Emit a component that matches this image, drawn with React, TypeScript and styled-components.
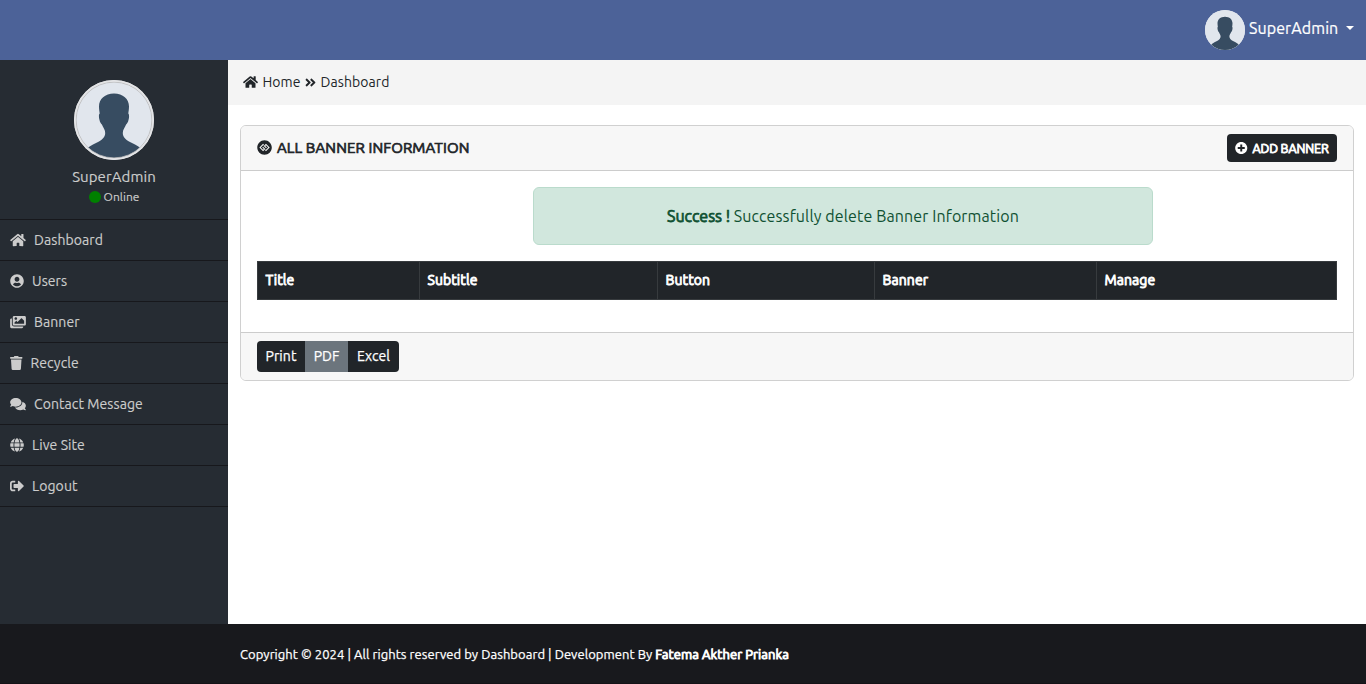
import React from "react";
import styled, { createGlobalStyle } from "styled-components";
import {
  FaHome,
  FaUserCircle,
  FaImages,
  FaTrash,
  FaComments,
  FaGlobe,
  FaSignOutAlt,
  FaAngleDoubleRight,
  FaGgCircle,
  FaPlusCircle,
} from "react-icons/fa";

const Global = createGlobalStyle`
  *, *::before, *::after { box-sizing: border-box; }
  body {
    margin: 0;
    background: #fff;
    color: #212529;
    font-family: Ubuntu, "Noto Sans", sans-serif;
    overflow: hidden;
  }
  svg { display: block; flex: none; }
`;

const Label = styled.span<{ $size: number; $track?: number; $stroke?: number }>`
  font-size: ${(p) => p.$size}px;
  letter-spacing: ${(p) => p.$track ?? 0}px;
  font-weight: 400;
  -webkit-text-stroke: ${(p) => p.$stroke ?? 0}px currentColor;
  line-height: 20px;
  white-space: pre;
`;

const Icon = styled.span<{ $width: number; $height?: number }>`
  display: flex;
  flex: none;
  svg {
    width: ${(p) => p.$width}px;
    height: ${(p) => p.$height ?? 14}px;
  }
`;

const Page = styled.div`
  height: 684px;
  display: flex;
  flex-direction: column;
`;

const TopBar = styled.header`
  height: 60px;
  flex: none;
  background: #4c6298;
  color: #fff;
  display: flex;
  justify-content: flex-end;
  padding: 10px 12px 0 0;
`;

const UserMenu = styled.div`
  display: flex;
  height: 40px;
  gap: 4px;
`;

const UserName = styled.div`
  display: flex;
  width: 105px;
  height: 36px;
  align-items: center;
  justify-content: space-between;
`;

const Caret = styled.i`
  border-top: 4px solid #fff;
  border-left: 4px solid transparent;
  border-right: 4px solid transparent;
`;

const Middle = styled.div`
  flex: 1;
  display: flex;
`;

const Sidebar = styled.aside`
  width: 228px;
  flex: none;
  background: #262c33;
  color: #ccc;
`;

const Profile = styled.div`
  height: 160px;
  border-bottom: 1px solid #17181c;
  padding-top: 20px;
  display: flex;
  flex-direction: column;
  align-items: center;
`;

const ProfileName = styled.div`
  height: 20px;
  margin-top: 7px;
  display: flex;
`;

const Status = styled.div`
  display: flex;
  align-items: center;
  gap: 3px;
  height: 20px;
`;

const Dot = styled.i`
  width: 12px;
  height: 12px;
  border-radius: 50%;
  background: #008000;
`;

const MenuItem = styled.a`
  height: 41px;
  border-bottom: 1px solid #17181c;
  padding-left: 10px;
  display: flex;
  align-items: center;
  gap: 8px;
`;

const Main = styled.main`
  flex: 1;
  min-width: 0;
`;

const Breadcrumb = styled.nav`
  height: 45px;
  background: #f4f4f4;
  padding: 0 0 1px 15px;
  display: flex;
  align-items: center;
  gap: 4.5px;
`;

const Card = styled.section`
  margin: 20px 12px 0;
  height: 256px;
  border: 1px solid #d0d0d0;
  border-radius: 6px;
  overflow: hidden;
  display: flex;
  flex-direction: column;
`;

const CardHeader = styled.div`
  height: 45px;
  flex: none;
  background: #f7f7f7;
  border-bottom: 1px solid #ccc;
  padding: 0 16px;
  display: flex;
  align-items: center;
  justify-content: space-between;
`;

const CardTitle = styled.div`
  display: flex;
  align-items: center;
  gap: 5px;
  padding-bottom: 1px;
`;

const AddButton = styled.button`
  width: 110px;
  height: 28px;
  border: 0;
  border-radius: 4px;
  background: #212529;
  color: #fff;
  font-family: inherit;
  padding: 0 8px 1px;
  display: flex;
  align-items: center;
  gap: 5px;
`;

const CardBody = styled.div`
  flex: 1;
  padding: 16px 16px 0;
`;

const Alert = styled.div`
  width: 620px;
  height: 58px;
  margin-left: 276px;
  border: 1px solid #badbcc;
  border-radius: 6px;
  background: #d1e7dd;
  color: #0f5132;
  display: flex;
  align-items: center;
  justify-content: center;
`;

const Table = styled.div`
  margin-top: 16px;
  height: 39px;
  display: grid;
  grid-template-columns: 161px 238px 217px 222px 240px;
  background: #212529;
  border: 1px solid #373b3e;
  color: #fff;
`;

const HeadCell = styled.div`
  padding: 0 0 1px 7.500px;
  display: flex;
  align-items: center;
  & + & { border-left: 1px solid #373b3e; }
`;

const CardFooter = styled.div`
  height: 48px;
  flex: none;
  background: #f7f7f7;
  border-top: 1px solid #ccc;
  padding: 8px 16px;
`;

const ButtonGroup = styled.div`
  display: inline-flex;
  height: 31px;
  border-radius: 4px;
  overflow: hidden;
`;

const ExportButton = styled.button<{ $width: number; $muted?: boolean }>`
  width: ${(p) => p.$width}px;
  border: 0;
  padding: 0 0 2px;
  font-family: inherit;
  color: #fff;
  background: ${(p) => (p.$muted ? "#6c757d" : "#212529")};
  display: flex;
  align-items: center;
  justify-content: center;
`;

const Footer = styled.footer`
  height: 60px;
  flex: none;
  background: #18191d;
  border-bottom: 1px solid #141217;
  color: #fff;
  padding-left: 240px;
  display: flex;
  align-items: center;
`;

function Avatar({ size, ring }: { size: number; ring?: boolean }) {
  const id = `avatar-${size}`;
  return (
    <svg width={size} height={size} viewBox="0 0 80 80">
      <clipPath id={id}>
        <circle cx="40" cy="40" r={ring ? 38 : 40} />
      </clipPath>
      <circle cx="40" cy="40" r="40" fill={ring ? "#e3e4e6" : "#e1e6ed"} />
      <g clipPath={`url(#${id})`}>
        <rect width="80" height="80" fill="#e1e6ed" />
        <path
          fill="#374c61"
          d="M40 13.500c-9 0-15 5.500-15 13 0 3 .5 5 .7 7-1.100 1-.9 4-.2 6.500.6 2.600 1.400 3.500 2.400 4.500 1 3 3.300 5 3.300 8.500 0 4-3 6.600-6.200 8.500-4 2.300-8 3.500-12 7v12h54v-12c-4-3.500-8-4.700-12-7-3.200-1.900-6.200-4.500-6.200-8.500 0-3.500 2.300-5.500 3.300-8.500 1-1 1.800-1.900 2.400-4.500.7-2.500.9-5.500-.2-6.500.2-2 .7-4 .7-7 0-7.500-6-13-15-13z"
        />
      </g>
      {ring && <circle cx="40" cy="40" r="37.900" fill="none" stroke="#b9b9ba" strokeWidth=".8" />}
      {ring && <circle cx="40" cy="40" r="39.200" fill="none" stroke="#e3e4e6" strokeWidth="1.600" />}
    </svg>
  );
}

const menu = [
  { icon: <FaHome />, width: 16, text: "Dashboard" },
  { icon: <FaUserCircle />, width: 14, text: "Users" },
  { icon: <FaImages />, width: 16, text: "Banner" },
  { icon: <FaTrash />, width: 12.5, text: "Recycle" },
  { icon: <FaComments />, width: 16, text: "Contact Message" },
  { icon: <FaGlobe />, width: 14, text: "Live Site" },
  { icon: <FaSignOutAlt />, width: 14, text: "Logout" },
];

const columns = ["Title", "Subtitle", "Button", "Banner", "Manage"];

export default function App() {
  return (
    <Page>
      <Global />
      <TopBar>
        <UserMenu>
          <Avatar size={40} />
          <UserName>
            <Label $size={16} $track={0.1} $stroke={0.2}>SuperAdmin</Label>
            <Caret />
          </UserName>
        </UserMenu>
      </TopBar>
      <Middle>
        <Sidebar>
          <Profile>
            <Avatar size={80} ring />
            <ProfileName>
              <Label $size={15} $track={0.08} $stroke={0.15}>SuperAdmin</Label>
            </ProfileName>
            <Status>
              <Dot />
              <Label $size={12} $track={0.02} $stroke={0.15}>Online</Label>
            </Status>
          </Profile>
          {menu.map((m) => (
            <MenuItem key={m.text}>
              <Icon $width={m.width}>{m.icon}</Icon>
              <Label $size={14} $track={0.08} $stroke={0.15}>{m.text}</Label>
            </MenuItem>
          ))}
        </Sidebar>
        <Main>
          <Breadcrumb>
            <Icon $width={15}><FaHome /></Icon>
            <Label $size={14} $track={0.08}>Home</Label>
            <Icon $width={11} $height={13}><FaAngleDoubleRight /></Icon>
            <Label $size={14} $track={0.08}>Dashboard</Label>
          </Breadcrumb>
          <Card>
            <CardHeader>
              <CardTitle>
                <Icon $width={15} $height={15}><FaGgCircle /></Icon>
                <Label $size={15} $track={0.1} $stroke={0.7}>ALL BANNER INFORMATION</Label>
              </CardTitle>
              <AddButton>
                <Icon $width={12.5}><FaPlusCircle /></Icon>
                <Label $size={12.5} $track={-0.13} $stroke={0.8}>ADD BANNER</Label>
              </AddButton>
            </CardHeader>
            <CardBody>
              <Alert>
                <Label $size={16} $stroke={0.75}>Success ! </Label>
                <Label $size={16} $track={0.12}>Successfully delete Banner Information</Label>
              </Alert>
              <Table>
                {columns.map((c) => (
                  <HeadCell key={c}>
                    <Label $size={14} $track={0.08} $stroke={0.85}>{c}</Label>
                  </HeadCell>
                ))}
              </Table>
            </CardBody>
            <CardFooter>
              <ButtonGroup>
                <ExportButton $width={48}><Label $size={14} $track={0.08} $stroke={0.25}>Print</Label></ExportButton>
                <ExportButton $width={43} $muted><Label $size={14} $stroke={0.25}>PDF</Label></ExportButton>
                <ExportButton $width={51}><Label $size={14} $stroke={0.25}>Excel</Label></ExportButton>
              </ButtonGroup>
            </CardFooter>
          </Card>
        </Main>
      </Middle>
      <Footer>
        <Label $size={13} $track={0.055} $stroke={0.25}>Copyright © 2024 | All rights reserved by Dashboard | Development By </Label>
        <Label $size={13} $track={0.08} $stroke={0.85}>Fatema Akther Prianka</Label>
      </Footer>
    </Page>
  );
}
